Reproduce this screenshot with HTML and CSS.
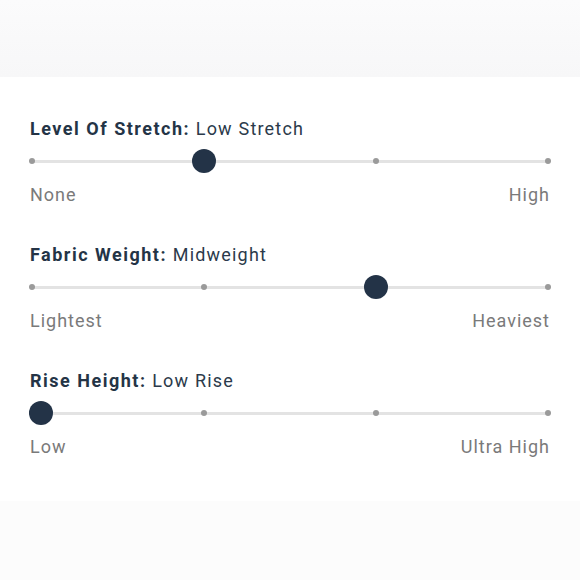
FILE: index.html
```html
<!DOCTYPE html>
<html>
<head>
<meta charset="utf-8">
<link rel="stylesheet" href="styles.css">
</head>
<body>
<div class="top-band"></div>
<main class="panel">
  <section class="attr">
    <h3 class="attr-title"><strong>Level Of Stretch:</strong> Low Stretch</h3>
    <div class="slider">
      <div class="track"><span class="dot"></span><span class="dot"></span><span class="dot"></span><span class="dot"></span></div>
      <span class="thumb" style="left:162px"></span>
    </div>
    <div class="ends"><span>None</span><span>High</span></div>
  </section>
  <section class="attr">
    <h3 class="attr-title"><strong>Fabric Weight:</strong> Midweight</h3>
    <div class="slider">
      <div class="track"><span class="dot"></span><span class="dot"></span><span class="dot"></span><span class="dot"></span></div>
      <span class="thumb" style="left:334px"></span>
    </div>
    <div class="ends"><span>Lightest</span><span>Heaviest</span></div>
  </section>
  <section class="attr">
    <h3 class="attr-title"><strong>Rise Height:</strong> Low Rise</h3>
    <div class="slider">
      <div class="track"><span class="dot"></span><span class="dot"></span><span class="dot"></span><span class="dot"></span></div>
      <span class="thumb" style="left:-1px"></span>
    </div>
    <div class="ends"><span>Low</span><span>Ultra High</span></div>
  </section>
</main>
<div class="bottom-band"></div>
</body>
</html>
```
FILE: styles.css
```css
html, body {
  margin: 0;
  padding: 0;
  background: #ffffff;
}
body {
  width: 580px;
  height: 580px;
  overflow: hidden;
  font-family: Roboto, "Liberation Sans", sans-serif;
}
.top-band {
  height: 77px;
  background: linear-gradient(180deg, #fbfbfc 0%, #f7f7f8 100%);
}
.panel {
  height: 424px;
  box-sizing: border-box;
  padding: 41px 30px 0 30px;
  display: flex;
  flex-direction: column;
  gap: 38px;
}
.attr {
  display: flex;
  flex-direction: column;
}
.attr-title {
  margin: 0;
  font-size: 18px;
  line-height: 22px;
  font-weight: 400;
  color: #2b3a4b;
  letter-spacing: 1.2px;
}
.attr-title strong {
  font-weight: 700;
  color: #243446;
  letter-spacing: 1.5px;
}
.slider {
  position: relative;
  height: 24px;
  margin-top: 9px;
  padding: 0 2px;
  display: flex;
  align-items: center;
}
.track {
  flex: 1;
  height: 3px;
  background: #e3e3e3;
  display: flex;
  justify-content: space-between;
  align-items: center;
}
.dot {
  width: 6px;
  height: 6px;
  border-radius: 50%;
  background: #9a9a9a;
  margin: 0 -3px;
}
.thumb {
  position: absolute;
  top: 0;
  width: 24px;
  height: 24px;
  border-radius: 50%;
  background: #233347;
}
.ends {
  margin-top: 11px;
  display: flex;
  justify-content: space-between;
  font-size: 18px;
  line-height: 22px;
  color: #7a7a7a;
  letter-spacing: 1px;
}
.bottom-band {
  height: 79px;
  background: #fcfcfc;
}
```
